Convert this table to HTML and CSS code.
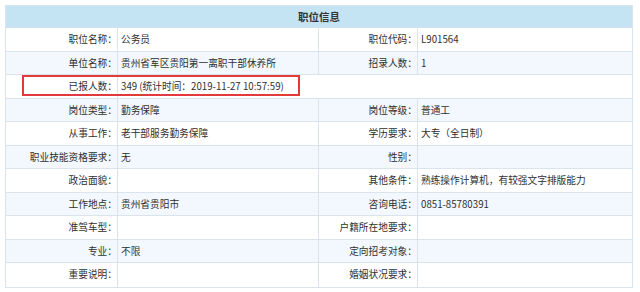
FILE: index.html
```html
<!DOCTYPE html>
<html lang="zh">
<head>
<meta charset="utf-8">
<link rel="stylesheet" href="styles.css">
</head>
<body>
<div class="table">
  <div class="head">职位信息</div>
  <div class="row"><div class="lbl">职位名称：</div><div class="val">公务员</div><div class="lbl">职位代码：</div><div class="val">L901564</div></div>
  <div class="row alt"><div class="lbl">单位名称：</div><div class="val">贵州省军区贵阳第一离职干部休养所</div><div class="lbl">招录人数：</div><div class="val">1</div></div>
  <div class="row wide"><div class="lbl">已报人数：</div><div class="val span">349 (统计时间：2019-11-27 10:57:59)</div><div class="mark"></div></div>
  <div class="row alt"><div class="lbl">岗位类型：</div><div class="val">勤务保障</div><div class="lbl">岗位等级：</div><div class="val">普通工</div></div>
  <div class="row"><div class="lbl">从事工作：</div><div class="val">老干部服务勤务保障</div><div class="lbl">学历要求：</div><div class="val">大专（全日制）</div></div>
  <div class="row alt"><div class="lbl">职业技能资格要求：</div><div class="val">无</div><div class="lbl">性别：</div><div class="val"></div></div>
  <div class="row"><div class="lbl">政治面貌：</div><div class="val"></div><div class="lbl">其他条件：</div><div class="val">熟练操作计算机，有较强文字排版能力</div></div>
  <div class="row alt"><div class="lbl">工作地点：</div><div class="val">贵州省贵阳市</div><div class="lbl">咨询电话：</div><div class="val">0851-85780391</div></div>
  <div class="row"><div class="lbl">准驾车型：</div><div class="val"></div><div class="lbl">户籍所在地要求：</div><div class="val"></div></div>
  <div class="row alt"><div class="lbl">专业：</div><div class="val">不限</div><div class="lbl">定向招考对象：</div><div class="val"></div></div>
  <div class="row last"><div class="lbl">重要说明：</div><div class="val"></div><div class="lbl">婚姻状况要求：</div><div class="val"></div></div>
</div>
</body>
</html>
```
FILE: styles.css
```css
html, body {
  margin: 0;
  padding: 0;
  background: #ffffff;
}
body {
  padding: 5px 0 0 5px;
  font-family: "Noto Sans CJK SC", "Noto Sans", sans-serif;
  font-size: 9.7px;
  color: #2f2f2f;
}
.table {
  width: 628px;
  border: 1px solid #dbe4ec;
  box-sizing: border-box;
}
.head {
  height: 22px;
  line-height: 22px;
  background: #c4e4f4;
  text-align: center;
  font-weight: bold;
  font-size: 10.5px;
  color: #333;
  border-bottom: 1px solid #d5e2ec;
  box-sizing: border-box;
}
.row {
  position: relative;
  display: grid;
  grid-template-columns: 112px 201px 99px 1fr;
  height: 23.5px;
  box-sizing: border-box;
  border-bottom: 1px solid #dbe4ec;
  background: #ffffff;
}
.row.alt {
  background: #f2f8fd;
}
.row.last {
  border-bottom: none;
}
.lbl {
  text-align: right;
  padding-right: 0;
  line-height: 22.5px;
  border-right: 1px solid #dbe4ec;
  white-space: nowrap;
}
.val {
  padding-left: 3px;
  line-height: 22.5px;
  white-space: nowrap;
}
.row .val:nth-child(2) {
  border-right: 1px solid #dbe4ec;
}
.row.wide .val.span {
  grid-column: 2 / 5;
  border-right: none;
}
.mark {
  position: absolute;
  left: 16px;
  top: 0;
  width: 278px;
  height: 21px;
  border: 2px solid #e23a3a;
  box-sizing: border-box;
}
```
